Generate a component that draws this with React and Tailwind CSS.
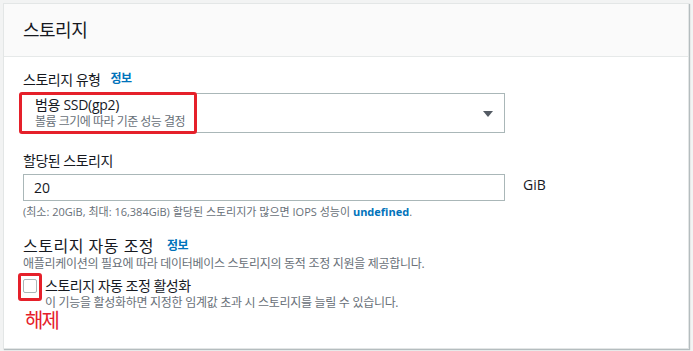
export default function App() {
  const font = { fontFamily: '"Open Sans", "Noto Sans CJK KR", sans-serif' };
  return (
    <div className="w-[693px] h-[351px] bg-[#f2f3f3] pt-[3px] pl-[3px] overflow-hidden" style={font}>
      <div className="w-[686px] h-[346px] bg-white border border-[#e3e6e6] shadow-[1px_1px_1px_rgba(0,28,36,0.25)] flex flex-col">
        <div className="h-[53px] bg-[#fafafa] border-b border-[#e6e9e9] flex items-center pl-[19px]">
          <h2 className="text-[18px] text-[#16191f] tracking-[-0.5px] leading-none">스토리지</h2>
        </div>
        <div className="pl-[19px] pt-[12px] flex flex-col">
          <div className="flex items-center gap-[10px] h-[20px]">
            <span className="text-[14px] text-[#16191f] tracking-[-0.5px]">스토리지 유형</span>
            <span className="text-[12px] font-bold text-[#0073bb] tracking-[-0.5px]">정보</span>
          </div>
          <div className="relative mt-[4px] ml-[-2px] w-[484px] h-[40px] border border-[#aab7b8] flex flex-row items-center">
            <div className="w-[13px] h-[10px] shrink-0" />
            <div className="flex flex-col leading-none">
              <span className="text-[14px] text-[#16191f] tracking-[-0.3px] leading-[16px]">범용 SSD(gp2)</span>
              <span className="text-[12px] text-[#687078] tracking-[-0.5px] leading-[14px] mt-[2px]">볼륨 크기에 따라 기준 성능 결정</span>
            </div>
            <svg width="12" height="8" viewBox="0 0 12 8" className="ml-auto mr-[10px] mt-[1px]">
              <path d="M1 1h10L6 7z" fill="#545b64" />
            </svg>
            <div className="absolute left-[-3px] top-[-2px] w-[178px] h-[42px] border-[3px] border-[#e5202a] rounded-[3px]" />
          </div>
          <div className="mt-[19px] h-[16px] flex items-center">
            <span className="text-[14px] text-[#16191f] tracking-[-0.5px]">할당된 스토리지</span>
          </div>
          <div className="mt-[6px] flex items-start">
            <div className="w-[482px] h-[27px] border border-[#aab7b8] flex items-center pl-[10px]">
              <span className="text-[14px] text-[#16191f]">20</span>
            </div>
            <span className="ml-[18px] mt-[0px] text-[14px] text-[#16191f]">GiB</span>
          </div>
          <div className="mt-[3px] text-[11px] text-[#687078] tracking-[0px]">
            (최소: 20GiB, 최대: 16,384GiB) 할당된 스토리지가 많으면 IOPS 성능이 <span className="font-bold text-[#0073bb]">undefined</span>.
          </div>
          <div className="mt-[15px] flex items-center gap-[13px] h-[20px]">
            <span className="text-[16px] text-[#16191f] tracking-[0.5px]">스토리지 자동 조정</span>
            <span className="text-[12px] font-bold text-[#0073bb] tracking-[-0.5px]">정보</span>
          </div>
          <div className="text-[12px] text-[#687078] tracking-[-0.3px] leading-[16px]">
            애플리케이션의 필요에 따라 데이터베이스 스토리지의 동적 조정 지원을 제공합니다.
          </div>
          <div className="mt-[5px] flex items-start">
            <div className="relative w-[14px] h-[14px] mt-[2px] border border-[#aab7b8] rounded-[2px] bg-white">
              <div className="absolute -left-[6px] -top-[7px] w-[24px] h-[28px] border-[3px] border-[#e5202a] rounded-[3px]" />
            </div>
            <div className="ml-[8px] flex flex-col">
              <span className="text-[14px] text-[#16191f] tracking-[-0.5px] leading-[18px]">스토리지 자동 조정 활성화</span>
              <span className="text-[12px] text-[#687078] tracking-[-0.3px] leading-[16px]">이 기능을 활성화하면 지정한 임계값 초과 시 스토리지를 늘릴 수 있습니다.</span>
            </div>
          </div>
          <div className="mt-[-2px] ml-[2px] text-[20px] text-[#e5202a] tracking-[-2px] leading-[24px]">해제</div>
        </div>
      </div>
    </div>
  );
}
